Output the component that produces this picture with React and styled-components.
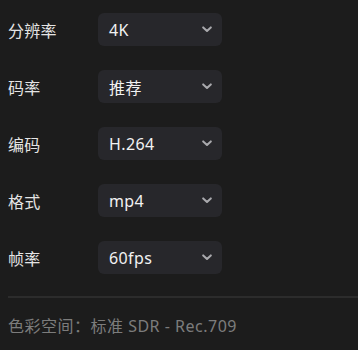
import styled, { createGlobalStyle } from "styled-components";

const options = [
  { label: "分辨率", value: "4K" },
  { label: "码率", value: "推荐" },
  { label: "编码", value: "H.264" },
  { label: "格式", value: "mp4" },
  { label: "帧率", value: "60fps" },
];

const GlobalStyle = createGlobalStyle`
  html, body {
    margin: 0;
    background: #1c1c1c;
  }
  body {
    font-family: "Noto Sans", "Noto Sans CJK SC", sans-serif;
  }
`;

const Chevron = () => (
  <svg width="10" height="7" viewBox="0 0 10 7" fill="none">
    <path d="M1.2 1.4 L5 5 L8.8 1.4" stroke="#a9a9ad" strokeWidth="2" strokeLinecap="round" strokeLinejoin="round" />
  </svg>
);

export default function App() {
  return (
    <>
      <GlobalStyle />
      <Panel>
        <Rows>
          {options.map((opt) => (
            <Row key={opt.label}>
              <Label>{opt.label}</Label>
              <Select>
                <span>{opt.value}</span>
                <Chevron />
              </Select>
            </Row>
          ))}
        </Rows>
        <Divider />
        <Footer>色彩空间：标准 SDR - Rec.709</Footer>
      </Panel>
    </>
  );
}

const Panel = styled.div`
  width: 358px;
  height: 350px;
  box-sizing: border-box;
  padding: 13px 0 0 8px;
  background: #1c1c1c;
  overflow: hidden;
`;

const Rows = styled.div`
  display: flex;
  flex-direction: column;
  gap: 24px;
`;

const Row = styled.div`
  display: flex;
  align-items: center;
`;

const Label = styled.div`
  width: 90px;
  font-size: 16px;
  letter-spacing: 0.3px;
  color: #e4e4e4;
`;

const Select = styled.div`
  width: 124px;
  height: 33px;
  box-sizing: border-box;
  display: flex;
  align-items: center;
  justify-content: space-between;
  padding: 0 10px 0 11px;
  border-radius: 6px;
  background: #27272b;
  color: #f2f2f2;
  font-size: 16px;
  letter-spacing: 0.4px;
`;

const Divider = styled.div`
  height: 2px;
  margin-top: 22px;
  background: #2c2c2c;
`;

const Footer = styled.div`
  margin-top: 17px;
  font-size: 16px;
  line-height: 22px;
  letter-spacing: 0.5px;
  color: #7c7c7c;
`;
